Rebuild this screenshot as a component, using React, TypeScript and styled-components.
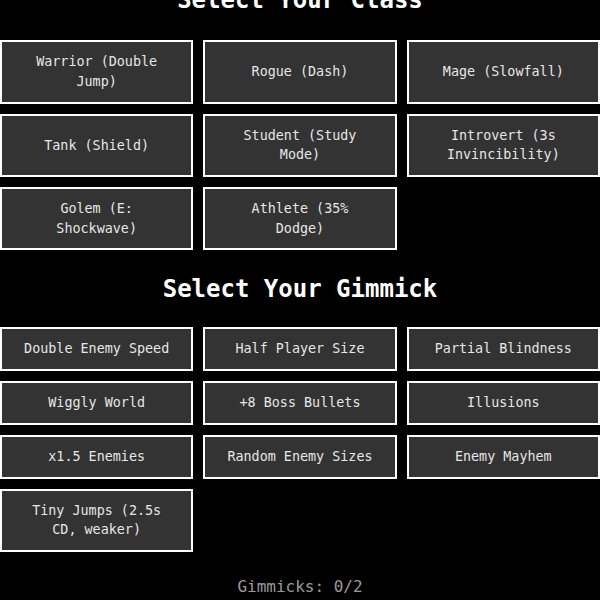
import React from "react";
import styled, { createGlobalStyle } from "styled-components";

const GlobalStyle = createGlobalStyle`
  html, body {
    margin: 0;
    padding: 0;
    background: #000;
  }
  body {
    font-family: "DejaVu Sans Mono", "Liberation Mono", monospace;
    color: #fff;
  }
`;

const Page = styled.div`
  height: 600px;
  overflow: hidden;
  display: flex;
  flex-direction: column;
  justify-content: flex-end;
  padding-bottom: 1px;
  box-sizing: border-box;
`;

const Section = styled.section<{ $gap?: number }>`
  display: flex;
  flex-direction: column;
  gap: ${(p) => p.$gap ?? 22}px;
  margin-bottom: 23px;
`;

const Heading = styled.h2`
  margin: 0;
  text-align: center;
  font-size: 24px;
  line-height: 32px;
  font-weight: bold;
  color: #fff;
`;

const Grid = styled.div`
  display: grid;
  grid-template-columns: repeat(3, 1fr);
  gap: 10px;
`;

const Choice = styled.button<{ $selected?: boolean }>`
  font-family: inherit;
  font-size: 13.4px;
  line-height: 19.7px;
  padding: 10px 20px;
  border: 2px solid ${(p) => (p.$selected ? "#ffd54a" : "#fff")};
  background: #333;
  color: #e6e6e6;
  text-align: center;
  cursor: pointer;
  box-sizing: border-box;
`;

const Counter = styled.div`
  text-align: center;
  font-size: 16px;
  line-height: 24px;
  color: #9a9a9a;
`;

const classes = [
  "Warrior (Double Jump)",
  "Rogue (Dash)",
  "Mage (Slowfall)",
  "Tank (Shield)",
  "Student (Study Mode)",
  "Introvert (3s Invincibility)",
  "Golem (E: Shockwave)",
  "Athlete (35% Dodge)",
];

const gimmicks = [
  "Double Enemy Speed",
  "Half Player Size",
  "Partial Blindness",
  "Wiggly World",
  "+8 Boss Bullets",
  "Illusions",
  "x1.5 Enemies",
  "Random Enemy Sizes",
  "Enemy Mayhem",
  "Tiny Jumps (2.5s CD, weaker)",
];

export default function App() {
  const [picked, setPicked] = React.useState<string[]>([]);
  const toggle = (g: string) =>
    setPicked((cur) =>
      cur.includes(g) ? cur.filter((x) => x !== g) : cur.length < 2 ? [...cur, g] : cur
    );

  return (
    <>
      <GlobalStyle />
      <Page>
        <Section $gap={24}>
          <Heading>Select Your Class</Heading>
          <Grid>
            {classes.map((c) => (
              <Choice key={c}>{c}</Choice>
            ))}
          </Grid>
        </Section>
        <Section>
          <Heading>Select Your Gimmick</Heading>
          <Grid>
            {gimmicks.map((g) => (
              <Choice key={g} $selected={picked.includes(g)} onClick={() => toggle(g)}>
                {g}
              </Choice>
            ))}
          </Grid>
        </Section>
        <Counter>Gimmicks: {picked.length}/2</Counter>
      </Page>
    </>
  );
}
